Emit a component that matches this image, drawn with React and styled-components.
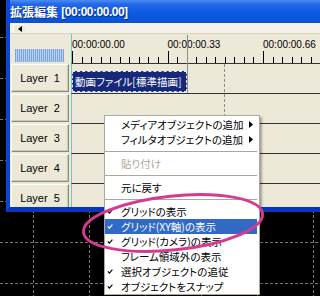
import React from "react";
import styled, { createGlobalStyle } from "styled-components";

const GlobalStyle = createGlobalStyle`
  html, body {
    margin: 0;
    padding: 0;
    background: #000;
  }
  body {
    width: 320px;
    height: 296px;
    overflow: hidden;
  }
`;

const TICK = 9.55;
const layers = [1, 2, 3, 4, 5];
const labels = ["00:00:00.00", "00:00:00.33", "00:00:00.66"];

const menuItems = [
  { label: "メディアオブジェクトの追加", sub: true },
  { label: "フィルタオブジェクトの追加", sub: true },
  { sep: true },
  { label: "貼り付け", disabled: true },
  { sep: true },
  { label: "元に戻す" },
  { sep: true },
  { label: "グリッドの表示", checked: true },
  { label: "グリッド(XY軸)の表示", checked: true, active: true },
  { label: "グリッド(カメラ)の表示", checked: true },
  { label: "フレーム領域外の表示" },
  { label: "選択オブジェクトの追従", checked: true },
  { label: "オブジェクトをスナップ", checked: true },
];

const Screen = styled.div`
  position: relative;
  width: 320px;
  height: 296px;
  overflow: hidden;
  background: #000;
  font-family: "Liberation Sans", "Noto Sans CJK JP", sans-serif;
`;

const CanvasGrid = styled.svg`
  position: absolute;
  left: 0;
  top: 0;
`;

const EditWindow = styled.div`
  position: relative;
  margin-left: 6px;
  width: 330px;
  display: flex;
  flex-direction: column;
  background: #ece9d8;
  border-left: 4px solid #0b45d8;
  border-bottom: 5px solid #0a35b8;
`;

const TitleBar = styled.div`
  height: 23px;
  display: flex;
  align-items: center;
  background: linear-gradient(
    180deg,
    #4a8cf5 0%,
    #2368e6 18%,
    #0b5ae0 55%,
    #0a52d6 100%
  );
  color: #fff;
  font-size: 12px;
  font-weight: bold;
  white-space: pre;
  text-shadow: 1px 1px 0 #0a2c8a;
`;

const TitleTime = styled.span`
  letter-spacing: -0.5px;
`;

const ScrollStrip = styled.div`
  height: 10px;
  display: flex;
  align-items: flex-start;
  background: #f3f1e8;
  border-bottom: 1px solid #d8d4c0;
`;

const ArrowButton = styled.div`
  width: 12px;
  height: 8px;
  margin: 1px 0 0 3px;
  display: flex;
  align-items: center;
  justify-content: center;
  background: #ece9d8;
  border-top: 1px solid #fff;
  border-left: 1px solid #fff;
  box-sizing: border-box;
`;

const Header = styled.div`
  height: 29px;
  display: flex;
`;

const HeaderLeft = styled.div`
  width: 61px;
  flex-shrink: 0;
  display: flex;
  align-items: flex-end;
`;

const ZoomBar = styled.div`
  width: 49px;
  height: 13px;
  margin: 0 0 1px 5px;
  background: repeating-linear-gradient(
    90deg,
    #7ea3dc 0 1px,
    #b9cff0 1px 2px
  );
`;

const Ruler = styled.div`
  flex: 1;
  position: relative;
  border-left: 1px solid #5fcfc2;
  display: flex;
  flex-direction: column;
`;

const LabelRow = styled.div`
  display: flex;
  padding-top: 5px;
  height: 11px;
`;

const RulerLabel = styled.div`
  width: ${TICK * 10}px;
  flex-shrink: 0;
  font-size: 10px;
  line-height: 11px;
  color: #000;
`;

const Ticks = styled.svg`
  display: block;
  margin-top: auto;
`;

const LayerArea = styled.div`
  height: 144px;
  overflow: hidden;
  display: flex;
  flex-direction: column;
`;

const LayerRow = styled.div`
  height: 30px;
  flex-shrink: 0;
  display: flex;
`;

const LayerButton = styled.div`
  width: 58px;
  margin: 1px 2px 1px 1px;
  box-sizing: border-box;
  border: 1px solid;
  border-color: #fff #8d8a7c #8d8a7c #fff;
  box-shadow: inset -1px -1px 0 #cdc9b4;
  display: flex;
  align-items: center;
  justify-content: center;
  font-size: 11px;
  color: #000;
  white-space: pre;
`;

const Track = styled.div`
  flex: 1;
  border-left: 1px solid #5fcfc2;
  border-top: 1px solid #333;
  padding-top: 7px;
`;

const Clip = styled.div`
  width: ${TICK * 12}px;
  height: 21px;
  box-sizing: border-box;
  background: #172878;
  border: 1px dashed #dfe6ff;
  color: #fff;
  font-family: "Noto Sans CJK JP", sans-serif;
  font-feature-settings: "palt";
  font-size: 10.5px;
  line-height: 19px;
  padding-left: 2px;
  white-space: nowrap;
  overflow: hidden;
`;

const EndLine = styled.div`
  position: absolute;
  left: 177px;
  top: 35px;
  width: 0;
  height: 58px;
  border-left: 1px solid #8c8c8c;
`;

const SceneLine = styled.div`
  position: absolute;
  left: 214px;
  top: 64px;
  width: 0;
  height: 143px;
  border-left: 1px dashed #8c8c8c;
`;

const Menu = styled.div`
  position: absolute;
  left: 104px;
  top: 115px;
  width: 156px;
  box-sizing: border-box;
  padding: 1px 2px 0 0;
  background: #fff;
  border: 1px solid #aca899;
  box-shadow: 2px 2px 2px rgba(0, 0, 0, 0.3);
  font-family: "Noto Sans CJK JP", sans-serif;
  font-feature-settings: "palt";
  font-size: 10.5px;
`;

const MenuItem = styled.div`
  height: 15px;
  display: flex;
  align-items: center;
  background: ${(p) => (p.$active ? "#316ac5" : "transparent")};
  color: ${(p) => (p.$active ? "#fff" : p.$disabled ? "#aca899" : "#000")};
  white-space: nowrap;
`;

const CheckCell = styled.div`
  width: 16px;
  flex-shrink: 0;
  display: flex;
  align-items: center;
  padding-left: 2px;
  box-sizing: border-box;
`;

const ItemLabel = styled.span`
  flex: 1;
`;

const SubArrow = styled.svg`
  margin-right: 4px;
`;

const Separator = styled.div`
  height: 9px;
  display: flex;
  align-items: center;

  &::after {
    content: "";
    flex: 1;
    height: 1px;
    background: #aca899;
  }
`;

const Circle = styled.svg`
  position: absolute;
  left: 0;
  top: 0;
  pointer-events: none;
`;

const Check = ({ color }) => (
  <svg width="6" height="5" viewBox="0 0 6 5">
    <path d="M0.8 2.4 L2.4 4.2 L5.4 0.6" fill="none" stroke={color} strokeWidth="1.1" />
  </svg>
);

const App = () => {
  const tickCount = 27;
  return (
    <Screen>
      <GlobalStyle />
      <CanvasGrid width="320" height="296">
        {[33, 89, 145, 201, 257, 313].map((x) => (
          <line
            key={"v" + x}
            x1={x + 0.5}
            y1="0"
            x2={x + 0.5}
            y2="296"
            stroke="#777"
            strokeDasharray="3 2"
          />
        ))}
        {[37, 78, 119, 160, 201, 242, 283].map((y) => (
          <line
            key={"h" + y}
            x1="0"
            y1={y + 0.5}
            x2="320"
            y2={y + 0.5}
            stroke="#777"
            strokeDasharray="3 2"
          />
        ))}
      </CanvasGrid>

      <EditWindow>
        <TitleBar>
          拡張編集 <TitleTime>[00:00:00.00]</TitleTime>
        </TitleBar>
        <ScrollStrip>
          <ArrowButton>
            <svg width="4" height="6" viewBox="0 0 4 6">
              <path d="M4 0 L0 3 L4 6 Z" fill="#000" />
            </svg>
          </ArrowButton>
        </ScrollStrip>
        <Header>
          <HeaderLeft>
            <ZoomBar />
          </HeaderLeft>
          <Ruler>
            <LabelRow>
              {labels.map((l) => (
                <RulerLabel key={l}>{l}</RulerLabel>
              ))}
            </LabelRow>
            <Ticks width="260" height="13">
              {Array.from({ length: tickCount }, (_, i) => {
                const x = Math.round(i * TICK) + 0.5;
                const major = i % 10 === 0;
                return (
                  <line
                    key={i}
                    x1={x}
                    y1={major ? 1 : 7}
                    x2={x}
                    y2="13"
                    stroke="#000"
                  />
                );
              })}
            </Ticks>
          </Ruler>
        </Header>
        <LayerArea>
          {layers.map((n) => (
            <LayerRow key={n}>
              <LayerButton>{`Layer  ${n}`}</LayerButton>
              <Track>
                {n === 1 && <Clip>動画ファイル[標準描画]</Clip>}
              </Track>
            </LayerRow>
          ))}
        </LayerArea>
        <EndLine />
        <SceneLine />
      </EditWindow>

      <Menu>
        {menuItems.map((item, i) =>
          item.sep ? (
            <Separator key={i} />
          ) : (
            <MenuItem key={i} $active={item.active} $disabled={item.disabled}>
              <CheckCell>
                {item.checked && (
                  <Check color={item.active ? "#fff" : "#000"} />
                )}
              </CheckCell>
              <ItemLabel>{item.label}</ItemLabel>
              {item.sub && (
                <SubArrow width="4" height="7" viewBox="0 0 4 7">
                  <path d="M0 0 L4 3.5 L0 7 Z" fill="#000" />
                </SubArrow>
              )}
            </MenuItem>
          )
        )}
      </Menu>

      <Circle width="320" height="296">
        <ellipse
          cx="173"
          cy="223"
          rx="90"
          ry="27"
          transform="rotate(-6 173 223)"
          fill="none"
          stroke="#d43a92"
          strokeWidth="3"
        />
      </Circle>
    </Screen>
  );
};

export default App;
